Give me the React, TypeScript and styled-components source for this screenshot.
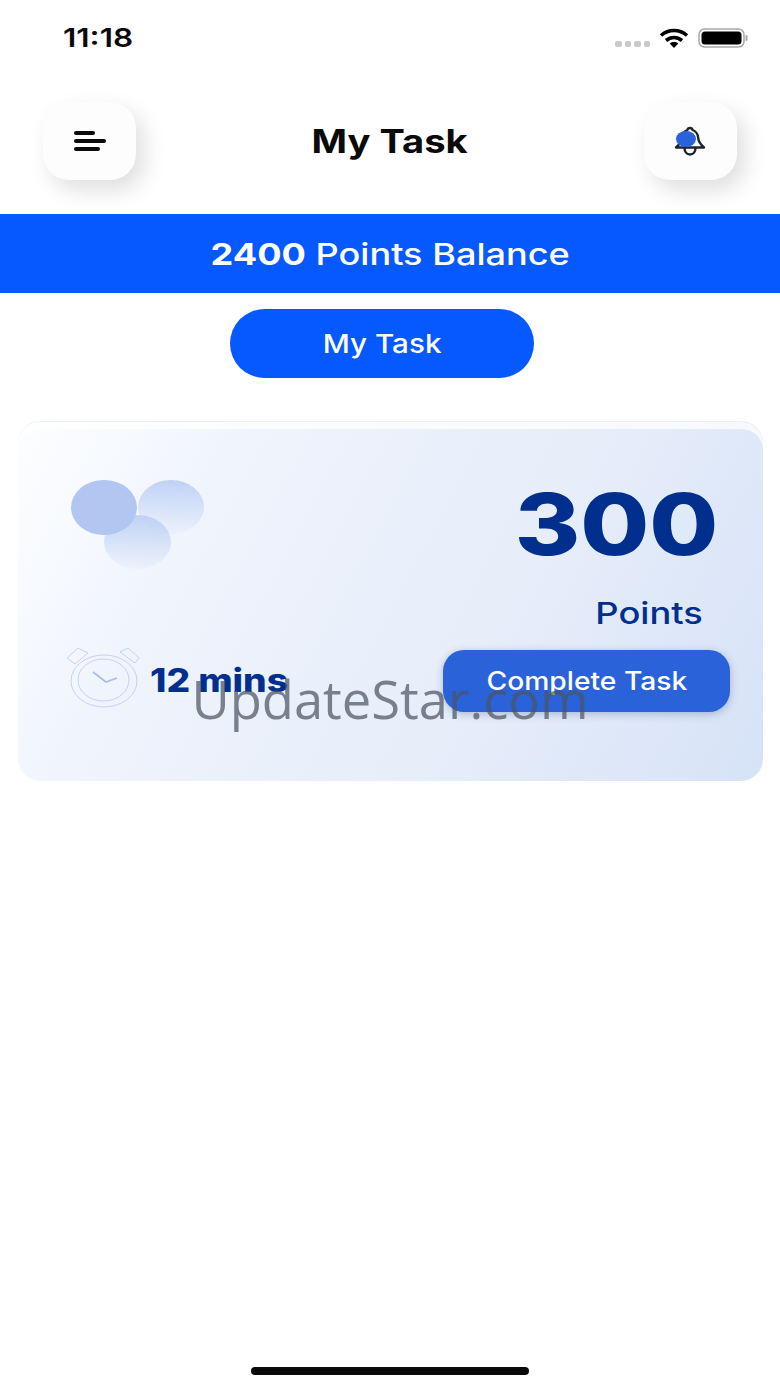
import React from 'react';
import styled, { createGlobalStyle } from 'styled-components';

const GlobalStyle = createGlobalStyle`
  html, body {
    margin: 0;
    padding: 0;
    background: #ffffff;
    font-family: Inter, "Liberation Sans", sans-serif;
  }
`;

const Screen = styled.div`
  position: relative;
  width: 780px;
  height: 1387px;
  display: flex;
  flex-direction: column;
  overflow: hidden;
  background: #ffffff;
`;

// the source screenshot is stretched sideways, so text gets widened too
const Wide = styled.span<{ $x: number; $origin?: string }>`
  display: inline-block;
  white-space: nowrap;
  transform: scaleX(${(p) => p.$x});
  transform-origin: ${(p) => p.$origin || 'center'};
`;

const StatusBar = styled.div`
  height: 102px;
  box-sizing: border-box;
  padding: 20px 32px 0 63px;
  display: flex;
  justify-content: space-between;
  align-items: flex-start;
`;

const Clock = styled.div`
  font-size: 26px;
  line-height: 36px;
  font-weight: 600;
  color: #0a0a0a;
`;

const StatusIcons = styled.div`
  display: flex;
  align-items: flex-start;
  gap: 9px;
  padding-top: 8px;
`;

const SignalDots = styled.div`
  display: flex;
  gap: 3px;
  padding-top: 13px;
`;

const SignalDot = styled.i`
  width: 6.5px;
  height: 6px;
  border-radius: 2px;
  background: #c9c9c9;
`;

const Header = styled.div`
  height: 78px;
  padding: 0 43px;
  display: flex;
  align-items: center;
  justify-content: space-between;
`;

const IconButton = styled.button`
  width: 93px;
  height: 78px;
  border: none;
  padding: 0;
  border-radius: 26px;
  background: #fdfdfd;
  box-shadow: 8px 10px 22px rgba(0, 0, 0, 0.13);
  display: flex;
  align-items: center;
  justify-content: center;
`;

const Title = styled.h1`
  margin: 0;
  font-size: 33px;
  line-height: 40px;
  font-weight: 700;
  color: #0a0a0a;
`;

const BalanceBar = styled.div`
  margin-top: 34px;
  height: 79px;
  background: #0658ff;
  color: #ffffff;
  display: flex;
  align-items: center;
  justify-content: center;
  font-size: 30px;
  font-weight: 500;
`;

const BalanceValue = styled.b`
  font-weight: 700;
`;

const TabRow = styled.div`
  margin-top: 16px;
  padding-left: 230px;
`;

const TabPill = styled.div`
  width: 304px;
  height: 69px;
  border-radius: 35px;
  background: #0658ff;
  color: #ffffff;
  font-size: 26px;
  font-weight: 500;
  display: flex;
  align-items: center;
  justify-content: center;
`;

const TaskCard = styled.div`
  margin: 43px 0 0 18px;
  width: 745px;
  height: 360px;
  box-sizing: border-box;
  padding: 58px 33px 69px 49px;
  display: flex;
  justify-content: space-between;
  border-radius: 22px;
  border-top: 1px solid #e9eff6;
  background: linear-gradient(118deg, #fdfeff 0%, #eef3fc 28%, #e7eefa 62%, #d6e2f7 100%);
  box-shadow: inset 0 7px 0 rgba(255, 255, 255, 0.72);
`;

const CardLeft = styled.div`
  display: flex;
  flex-direction: column;
  justify-content: space-between;
`;

const Bubbles = styled.svg`
  display: block;
  margin-left: 4px;
`;

const TimeRow = styled.div`
  display: flex;
  align-items: center;
  gap: 10px;
  margin-bottom: 3px;
`;

const TimeText = styled.div`
  padding-top: 4px;
  font-size: 32px;
  font-weight: 800;
  color: #002f8e;
`;

const CardRight = styled.div`
  display: flex;
  flex-direction: column;
  align-items: flex-end;
`;

const PointsValue = styled.div`
  margin: -7px 12px 0 0;
  font-size: 85px;
  line-height: 104px;
  font-weight: 800;
  color: #002f8e;
`;

const PointsLabel = styled.div`
  margin: 16px 27px 0 0;
  font-size: 30px;
  line-height: 40px;
  font-weight: 500;
  color: #002f8e;
`;

const CompleteButton = styled.button`
  flex-shrink: 0;
  margin-top: 17px;
  width: 287px;
  height: 62px;
  border: none;
  border-radius: 21px;
  background: #2a62d9;
  box-shadow: 0 2px 8px rgba(20, 50, 120, 0.28);
  color: #ffffff;
  font-family: inherit;
  font-size: 25px;
  font-weight: 500;
`;

const HomeIndicator = styled.div`
  margin: auto 0 12px 251px;
  width: 278px;
  height: 8px;
  border-radius: 4px;
  background: #0a0a0a;
`;

const Watermark = styled.div`
  position: absolute;
  left: 0;
  right: 0;
  top: 664px;
  text-align: center;
  font-family: "Open Sans", "Liberation Sans", sans-serif;
  font-size: 52.5px;
  line-height: 70px;
  color: rgba(75, 85, 99, 0.72);
`;

const MenuIcon = () => (
  <svg width="32" height="21" viewBox="0 0 32 21">
    <rect x="0" y="0" width="21" height="4" rx="2" fill="#0a0a0a" />
    <rect x="0" y="8" width="32" height="4" rx="2" fill="#0a0a0a" />
    <rect x="0" y="16" width="26" height="4" rx="2" fill="#0a0a0a" />
  </svg>
);

const BellIcon = () => (
  <svg width="32" height="30" viewBox="0 0 32 30" fill="none">
    <path
      d="M16 2c-1.5 0-2.4.9-2.6 2C9.500 5.500 8 8.500 7.800 12c-.2 4-2.400 6.500-5.800 9.500h28c-3.400-3-5.600-5.500-5.800-9.500-.2-3.500-1.700-6.500-5.600-8-.2-1.100-1.100-2-2.600-2z"
      fill="#ffffff"
      stroke="#1c2430"
      strokeWidth="2.400"
      strokeLinejoin="round"
    />
    <path d="M10.500 22c0 4 2.400 6.500 5.500 6.500s5.500-2.500 5.500-6.500" stroke="#1c2430" strokeWidth="2.400" />
    <ellipse cx="12" cy="13" rx="10" ry="8" fill="#2a62d9" />
  </svg>
);

const WifiIcon = () => (
  <svg width="30" height="20" viewBox="0 0 30 20" fill="none" stroke="#000000" strokeWidth="3.600">
    <path d="M2 7.500c7.500-6.700 18.500-6.700 26 0" />
    <path d="M7 12.500c4.800-4 11.200-4 16 0" />
    <path d="M15 20l-4.300-4.600c2.500-1.900 6.100-1.900 8.600 0z" fill="#000000" stroke="none" />
  </svg>
);

const BatteryIcon = () => (
  <svg width="50" height="20" viewBox="0 0 50 20">
    <rect x="1" y="1" width="45" height="18" rx="5.500" fill="none" stroke="#a8a8a8" strokeWidth="1.500" />
    <rect x="3.500" y="3.500" width="40" height="13" rx="3.500" fill="#000000" />
    <rect x="47.500" y="7" width="2" height="6" rx="1" fill="#a8a8a8" />
  </svg>
);

const BubbleCluster = () => (
  <Bubbles width="134" height="90" viewBox="0 0 134 90">
    <defs>
      <linearGradient id="bubbleFade" x1="0" y1="0" x2="0" y2="1">
        <stop offset="0" stopColor="#bfd2f5" />
        <stop offset="1" stopColor="#bfd2f5" stopOpacity="0.1" />
      </linearGradient>
    </defs>
    <ellipse cx="100" cy="27" rx="33" ry="27" fill="url(#bubbleFade)" />
    <ellipse cx="66.500" cy="62" rx="33.500" ry="27" fill="url(#bubbleFade)" />
    <ellipse cx="33" cy="27.500" rx="33" ry="27.500" fill="#b1c7f1" />
  </Bubbles>
);

const StopwatchIcon = () => (
  <svg width="73" height="62" viewBox="0 0 73 62" fill="none" stroke="#c3d1f3" strokeWidth="1">
    <ellipse cx="37" cy="34" rx="33" ry="26" />
    <ellipse cx="36.500" cy="33" rx="25.500" ry="21" />
    <path d="M0 11L11 1l10 5L8 17z" />
    <path d="M53 5l8-4 11 10-4 5z" />
    <path d="M26 25l13 10 11-4" stroke="#a9bcf0" strokeWidth="1.800" />
  </svg>
);

export default function App() {
  return (
    <Screen>
      <GlobalStyle />
      <StatusBar>
        <Clock>
          <Wide $x={1.21} $origin="left">11:18</Wide>
        </Clock>
        <StatusIcons>
          <SignalDots>
            <SignalDot />
            <SignalDot />
            <SignalDot />
            <SignalDot />
          </SignalDots>
          <WifiIcon />
          <BatteryIcon />
        </StatusIcons>
      </StatusBar>

      <Header>
        <IconButton>
          <MenuIcon />
        </IconButton>
        <Title>
          <Wide $x={1.155}>My Task</Wide>
        </Title>
        <IconButton>
          <BellIcon />
        </IconButton>
      </Header>

      <BalanceBar>
        <Wide $x={1.204}>
          <BalanceValue>2400</BalanceValue> Points Balance
        </Wide>
      </BalanceBar>

      <TabRow>
        <TabPill>
          <Wide $x={1.14}>My Task</Wide>
        </TabPill>
      </TabRow>

      <TaskCard>
        <CardLeft>
          <BubbleCluster />
          <TimeRow>
            <StopwatchIcon />
            <TimeText>
              <Wide $x={1.16} $origin="left">12 mins</Wide>
            </TimeText>
          </TimeRow>
        </CardLeft>
        <CardRight>
          <PointsValue>
            <Wide $x={1.175} $origin="right">300</Wide>
          </PointsValue>
          <PointsLabel>
            <Wide $x={1.21} $origin="right">Points</Wide>
          </PointsLabel>
          <CompleteButton>
            <Wide $x={1.13}>Complete Task</Wide>
          </CompleteButton>
        </CardRight>
      </TaskCard>

      <HomeIndicator />
      <Watermark>UpdateStar.com</Watermark>
    </Screen>
  );
}
